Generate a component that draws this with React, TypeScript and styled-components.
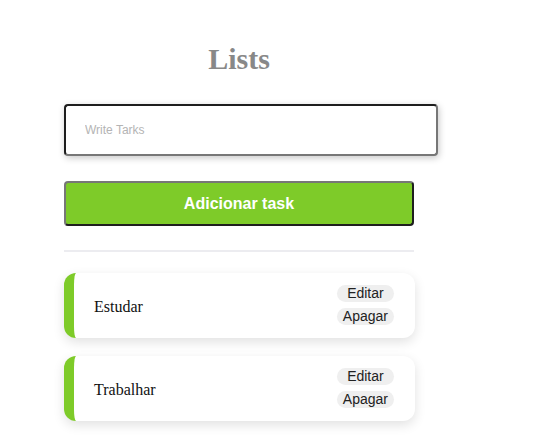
import React, { useState } from 'react';
import styled, { createGlobalStyle } from 'styled-components';

const GlobalStyle = createGlobalStyle`
  body {
    margin: 0;
    background: #ffffff;
    font-family: "Liberation Serif", "Times New Roman", serif;
  }
`;

const Page = styled.div`
  padding: 42px 0 20px 64px;
`;

const Container = styled.div`
  width: 350px;
  display: flex;
  flex-direction: column;
`;

const Title = styled.h1`
  margin: 0 0 28px;
  text-align: center;
  font-family: "Liberation Serif", "Times New Roman", serif;
  font-size: 30px;
  font-weight: 700;
  color: #888888;
`;

const TaskInput = styled.input`
  box-sizing: border-box;
  width: 374px;
  height: 52px;
  padding: 0 19px;
  border: 2px solid;
  border-color: #1e1e1e #777777 #777777 #1e1e1e;
  border-radius: 4px;
  box-shadow: 1px 2px 7px rgba(0, 0, 0, 0.22);
  font-family: "Liberation Sans", Arial, sans-serif;
  font-size: 12px;
  color: #333;
  outline: none;

  &::placeholder {
    color: #b4b4b4;
  }
`;

const AddButton = styled.button`
  box-sizing: border-box;
  margin-top: 25px;
  width: 350px;
  height: 45px;
  border: 2px solid;
  border-color: #777777 #1e1e1e #1e1e1e #777777;
  border-radius: 4px;
  background-color: #7ecb29;
  color: #ffffff;
  font-family: "Liberation Sans", Arial, sans-serif;
  font-size: 16px;
  font-weight: 700;
  cursor: pointer;
`;

const Divider = styled.hr`
  margin: 24px 0 21px;
  width: 100%;
  height: 2px;
  border: none;
  background-color: #ececf0;
`;

const List = styled.ul`
  margin: 0;
  padding: 0;
  list-style: none;
  display: flex;
  flex-direction: column;
  gap: 18px;
`;

const TaskCard = styled.li`
  box-sizing: border-box;
  width: 351px;
  display: flex;
  align-items: center;
  justify-content: space-between;
  padding: 12px 21px 13px 20px;
  border-left: 10px solid #7ecb29;
  border-radius: 12px;
  background: #ffffff;
  box-shadow: 0 4px 12px rgba(0, 0, 0, 0.12);
`;

const TaskName = styled.span`
  padding-top: 4px;
  font-family: "Liberation Serif", "Times New Roman", serif;
  font-size: 16px;
  color: #111;
`;

const Actions = styled.div`
  display: flex;
  flex-direction: column;
  gap: 6px;
`;

const SmallButton = styled.button`
  padding: 0 6px;
  height: 17px;
  line-height: 17px;
  border: none;
  border-radius: 9px;
  background-color: #efefef;
  color: #222;
  font-family: "Liberation Sans", Arial, sans-serif;
  font-size: 14px;
  cursor: pointer;
`;

const App: React.FC = () => {
  const [text, setText] = useState('');
  const [tasks] = useState<string[]>(['Estudar', 'Trabalhar']);

  return (
    <Page>
      <GlobalStyle />
      <Container>
        <Title>Lists</Title>
        <TaskInput
          placeholder="Write Tarks"
          value={text}
          onChange={(e) => setText(e.target.value)}
        />
        <AddButton>Adicionar task</AddButton>
        <Divider />
        <List>
          {tasks.map((task) => (
            <TaskCard key={task}>
              <TaskName>{task}</TaskName>
              <Actions>
                <SmallButton>Editar</SmallButton>
                <SmallButton>Apagar</SmallButton>
              </Actions>
            </TaskCard>
          ))}
        </List>
      </Container>
    </Page>
  );
};

export default App;
